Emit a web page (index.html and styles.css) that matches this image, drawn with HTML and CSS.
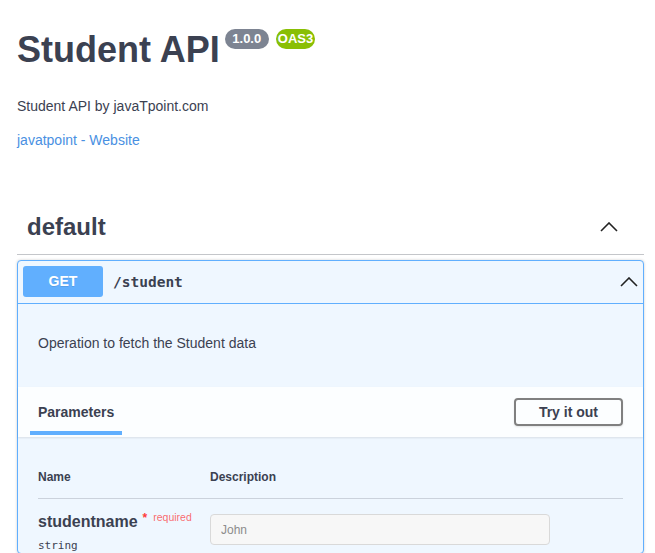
FILE: index.html
```html
<!DOCTYPE html>
<html lang="en">
<head>
<meta charset="utf-8">
<title>Student API</title>
<link rel="stylesheet" href="styles.css">
</head>
<body>
<div class="page">
  <header class="info">
    <div class="title-row">
      <h1 class="title">Student API</h1>
      <span class="badge badge-version"> 1.0.0 </span>
      <span class="badge badge-oas">OAS3</span>
    </div>
    <p class="desc">Student API by javaTpoint.com</p>
    <a class="link" href="#">javatpoint - Website</a>
  </header>

  <section class="tag-section">
    <div class="tag-header">
      <h2 class="tag-name">default</h2>
      <svg class="chev" width="18" height="10" viewBox="0 0 18 10"><polyline points="1,9 9,1 17,9" fill="none" stroke="#222" stroke-width="1.6"/></svg>
    </div>

    <div class="opblock">
      <div class="summary">
        <span class="method">GET</span>
        <span class="path">/student</span>
        <svg class="chev chev-op" width="18" height="10" viewBox="0 0 18 10"><polyline points="1,9 9,1 17,9" fill="none" stroke="#222" stroke-width="1.6"/></svg>
      </div>

      <div class="op-desc">Operation to fetch the Student data</div>

      <div class="section-header">
        <h4 class="tab"><span class="tab-label">Parameters</span></h4>
        <button class="try" type="button">Try it out</button>
      </div>

      <div class="table-wrap">
        <div class="param-head">
          <div class="col-name">Name</div>
          <div class="col-desc">Description</div>
        </div>
        <div class="param-row">
          <div class="col-name">
            <div class="pname">studentname<span class="req">*</span><span class="req-label">required</span></div>
            <div class="ptype">string</div>
          </div>
          <div class="col-desc">
            <input class="pinput" type="text" placeholder="John" disabled>
          </div>
        </div>
      </div>
    </div>
  </section>
</div>
</body>
</html>
```

FILE: styles.css
```css
html, body {
  margin: 0;
  padding: 0;
  background: #fff;
}

body {
  font-family: "Liberation Sans", Arial, sans-serif;
  color: #3b4151;
  height: 553px;
  overflow: hidden;
}

.page {
  padding: 0 11px 0 17px;
}

/* info */
.info {
  padding-top: 28px;
}

.title-row {
  display: flex;
  align-items: flex-start;
}

.title {
  margin: 0;
  font-size: 36px;
  line-height: 44px;
  font-weight: 700;
  color: #3b4151;
}

.badge {
  margin-top: 1px;
  font-size: 13px;
  line-height: 16px;
  font-weight: 700;
  color: #fff;
  padding: 2px 4px;
  border-radius: 57px;
  white-space: pre;
}

.badge-version {
  background: #7d8492;
  margin-left: 5px;
}

.badge-oas {
  background: #89bf04;
  margin-left: 7px;
  padding: 2px 2px;
}

.desc {
  margin: 24px 0 0;
  font-size: 14px;
  line-height: 20px;
}

.link {
  display: block;
  margin-top: 14px;
  font-size: 14px;
  line-height: 20px;
  color: #4990e2;
  text-decoration: none;
}

/* tag */
.tag-section {
  margin-top: 48px;
}

.tag-header {
  display: flex;
  align-items: center;
  justify-content: space-between;
  padding: 11px 26px 9px 10px;
  border-bottom: 1px solid rgba(59, 65, 81, 0.3);
}

.tag-name {
  margin: 0;
  font-size: 24px;
  line-height: 36px;
  font-weight: 700;
}

.chev {
  display: block;
}

/* opblock */
.opblock {
  margin-top: 5px;
  border: 1px solid #61affe;
  border-radius: 4px;
  background: #eff7ff;
  box-shadow: 0 0 3px rgba(0, 0, 0, 0.19);
}

.summary {
  display: flex;
  align-items: center;
  padding: 5px 5px 6px;
  border-bottom: 1px solid #61affe;
}

.method {
  width: 80px;
  height: 31px;
  line-height: 31px;
  text-align: center;
  border-radius: 3px;
  background: #61affe;
  color: #fff;
  font-size: 14px;
  font-weight: 700;
  text-shadow: 0 1px 0 rgba(0, 0, 0, 0.1);
}

.path {
  margin-left: 10px;
  font-family: "DejaVu Sans Mono", monospace;
  font-size: 14.5px;
  font-weight: 700;
  color: #3b4151;
  flex: 1;
}

.op-desc {
  padding: 29px 20px 34px;
  font-size: 14px;
  line-height: 20px;
}

.section-header {
  display: flex;
  align-items: center;
  justify-content: space-between;
  min-height: 50px;
  box-sizing: border-box;
  padding: 0 20px;
  background: rgba(255, 255, 255, 0.8);
  box-shadow: 0 1px 2px rgba(0, 0, 0, 0.1);
}

.tab {
  margin: 0;
  font-size: 14px;
  line-height: 20px;
  font-weight: 700;
}

.tab-label {
  position: relative;
  display: inline-block;
}

.tab-label::after {
  content: "";
  position: absolute;
  left: -8px;
  right: -8px;
  bottom: -13px;
  height: 4px;
  background: #61affe;
}

.try {
  font-family: "Liberation Sans", Arial, sans-serif;
  font-size: 14px;
  font-weight: 700;
  line-height: 16px;
  padding: 4px 23px;
  color: #3b4151;
  background: transparent;
  border: 2px solid #808080;
  border-radius: 4px;
  box-shadow: 0 1px 2px rgba(0, 0, 0, 0.1);
}

.table-wrap {
  padding: 20px 20px 0;
}

.param-head,
.param-row {
  display: grid;
  grid-template-columns: 172px 1fr;
}

.param-head {
  font-size: 12px;
  line-height: 15px;
  font-weight: 700;
  padding: 13px 0 13px;
  border-bottom: 1px solid rgba(59, 65, 81, 0.2);
}

.param-row {
  padding-top: 8px;
}

.pname {
  font-size: 16px;
  line-height: 20px;
  font-weight: 700;
}

.req {
  font-size: 12px;
  color: #ff3b3b;
  vertical-align: 5px;
  margin-left: 5px;
}

.req-label {
  font-size: 10.5px;
  font-weight: 400;
  color: rgba(255, 0, 0, 0.6);
  vertical-align: 6px;
  margin-left: 6px;
}

.ptype {
  margin-top: 7px;
  font-family: "DejaVu Sans Mono", monospace;
  font-size: 11px;
  line-height: 14px;
}

.pinput {
  display: block;
  margin: 7px 0 0;
  width: 340px;
  box-sizing: border-box;
  height: 31px;
  padding: 7px 10px;
  font-family: "Liberation Sans", Arial, sans-serif;
  font-size: 12px;
  line-height: 14px;
  color: #3b4151;
  background: #f7f7f7;
  border: 1px solid #d9d9d9;
  border-radius: 4px;
  outline: none;
}

.pinput::placeholder {
  color: #8c8c8c;
}
```
